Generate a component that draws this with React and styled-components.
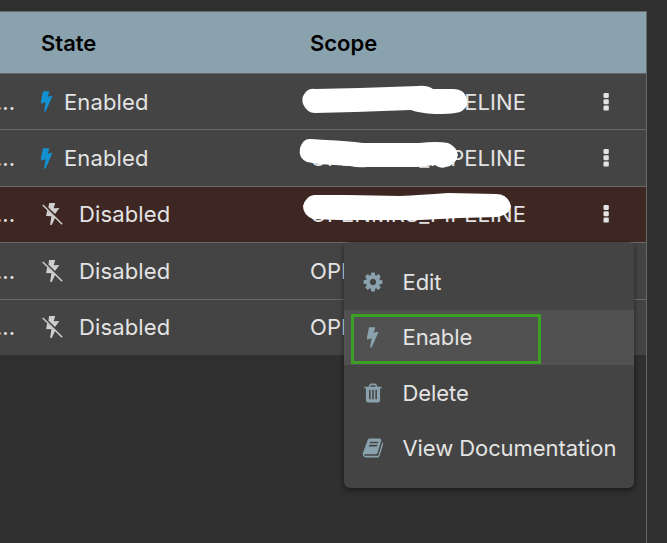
import React from "react";
import styled, { createGlobalStyle } from "styled-components";

const GlobalStyle = createGlobalStyle`
  * { box-sizing: border-box; }
  body {
    margin: 0;
    background: #303030;
    color: #e3e3e3;
    font-family: Inter, "Liberation Sans", sans-serif;
    font-size: 22px;
    overflow: hidden;
  }
`;

const Page = styled.div`
  position: relative;
  width: 667px;
  height: 543px;
  padding-top: 11px;
  overflow: hidden;
  background: #303030;
`;

const Table = styled.div`
  width: 647px;
  height: 532px;
  border-top: 1px solid #686868;
  border-right: 1px solid #686868;
`;

const Row = styled.div`
  display: grid;
  grid-template-columns: 41px 269px 270px 1fr;
  align-items: center;
  height: ${(p) => p.$height}px;
  padding-bottom: ${(p) => p.$lift || 0}px;
  background: ${(p) => (p.$selected ? "#3e2723" : "#444444")};
  border-bottom: ${(p) => (p.$last ? "0" : "1px solid #686868")};
  line-height: 28px;
`;

const HeaderRow = styled(Row)`
  background: #8aa2ae;
  color: #000;
  font-weight: 600;
`;

const Overflow = styled.div`
  display: flex;
  justify-content: flex-end;
  width: 15px;
  white-space: nowrap;
`;

const State = styled.div`
  display: flex;
  align-items: center;
`;

const StateIcon = styled.span`
  display: flex;
  flex: none;
  width: ${(p) => (p.$enabled ? 23 : 38)}px;
  padding-left: ${(p) => (p.$enabled ? 0 : 0.5)}px;
  color: ${(p) => (p.$enabled ? "#1390cf" : "#cfcfcf")};
`;

const Label = styled.span`
  letter-spacing: ${(p) => p.$spacing || 0}px;
  white-space: nowrap;
`;

const Scope = styled.div`
  position: relative;
  letter-spacing: 0.06px;
  white-space: nowrap;
`;

const Scribble = styled.svg`
  position: absolute;
  left: -15px;
  top: -19px;
  width: 230px;
  height: 60px;
  pointer-events: none;
`;

const MoreButton = styled.button`
  display: flex;
  justify-content: center;
  width: 20px;
  margin-left: 16px;
  padding: 0;
  border: 0;
  background: none;
  color: #e3e3e3;
`;

const Menu = styled.div`
  position: absolute;
  left: 344px;
  top: 242px;
  width: 290px;
  height: 246px;
  padding: 12px 0;
  display: flex;
  flex-direction: column;
  background: #444444;
  border-radius: 6px;
  box-shadow: 0 3px 6px rgba(0, 0, 0, 0.32), 0 1px 4px rgba(0, 0, 0, 0.2);
`;

const MenuItem = styled.div`
  display: flex;
  flex: 1;
  align-items: center;
  padding-left: 17px;
  background: ${(p) => (p.$active ? "#515151" : "transparent")};
`;

const MenuIcon = styled.span`
  display: flex;
  justify-content: center;
  width: 24px;
  margin-right: 17.5px;
  color: #8aa2ae;
`;

const Highlight = styled.div`
  position: absolute;
  left: 7px;
  top: 72px;
  width: 190px;
  height: 50px;
  border: 3px solid #3ba024;
`;

const paths = {
  cog: "M1152 896q0-106-75-181t-181-75-181 75-75 181 75 181 181 75 181-75 75-181zm512-109v222q0 12-8 23t-20 13l-185 28q-19 54-39 91 35 50 107 138 10 12 10 25t-9 23q-27 37-99 108t-94 71q-12 0-26-9l-138-108q-44 23-91 38-16 136-29 186-7 28-36 28h-222q-14 0-24.500-8.500t-11.500-21.500l-28-184q-49-16-90-37l-141 107q-10 9-25 9-14 0-25-11-126-114-165-168-7-10-7-23 0-12 8-23 15-21 51-66.500t54-70.500q-27-50-41-99l-183-27q-13-2-21-12.500t-8-23.500v-222q0-12 8-23t19-13l186-28q14-46 39-92-40-57-107-138-10-12-10-24 0-10 9-23 26-36 98.500-107.500t94.500-71.500q13 0 26 10l138 107q44-23 91-38 16-136 29-186 7-28 36-28h222q14 0 24.500 8.500t11.500 21.500l28 184q49 16 90 37l142-107q9-9 24-9 13 0 25 10 129 119 165 170 7 8 7 22 0 12-8 23-15 21-51 66.500t-54 70.500q26 50 41 98l183 28q13 2 21 12.500t8 23.500z",
  trash: "M704 1376v-704q0-14-9-23t-23-9h-64q-14 0-23 9t-9 23v704q0 14 9 23t23 9h64q14 0 23-9t9-23zm256 0v-704q0-14-9-23t-23-9h-64q-14 0-23 9t-9 23v704q0 14 9 23t23 9h64q14 0 23-9t9-23zm256 0v-704q0-14-9-23t-23-9h-64q-14 0-23 9t-9 23v704q0 14 9 23t23 9h64q14 0 23-9t9-23zm-544-992h448l-48-117q-7-9-17-11h-317q-10 2-17 11zm928 32v64q0 14-9 23t-23 9h-96v948q0 83-47 143.500t-113 60.500h-832q-66 0-113-58.500t-47-141.500v-952h-96q-14 0-23-9t-9-23v-64q0-14 9-23t23-9h309l70-167q15-37 54-63t79-26h320q40 0 79 26t54 63l70 167h309q14 0 23 9t9 23z",
  book: "M1703 478q40 57 18 129l-275 906q-19 64-76.500 107.500t-122.500 43.500h-923q-77 0-148.500-53.500t-99.500-131.500q-24-67-2-127 0-4 3-27t4-37q1-8-3-21.500t-3-19.500q2-11 8-21t16.500-23.500 16.500-23.500q23-38 45-91.500t30-91.500q3-10 .5-30t-.5-28q3-11 17-28t17-23q21-36 42-92t25-90q1-9-2.500-32t.5-28q4-13 22-30.500t22-22.500q19-26 42.500-84.500t27.500-96.500q1-8-3-25.500t-2-26.500q2-8 9-18t18-23 17-21q8-12 16.500-30.500t15-35 16-36 19.500-32 26.500-23.500 36-11.500 47.500 5.500l-1 3q38-9 51-9h761q74 0 114 56t18 130l-274 906q-36 119-71.500 153.500t-128.500 34.500h-869q-27 0-38 15-11 16-1 43 24 70 144 70h923q29 0 56-15.500t35-41.500l300-987q7-22 5-57 38 15 59 43zm-1064 2q-4 13 2 22.500t20 9.500h608q13 0 25.500-9.500t16.500-22.500l21-64q4-13-2-22.500t-20-9.500h-608q-13 0-25.500 9.500t-16.500 22.500zm-83 256q-4 13 2 22.500t20 9.500h608q13 0 25.500-9.500t16.500-22.500l21-64q4-13-2-22.500t-20-9.500h-608q-13 0-25.500 9.500t-16.500 22.500z",
};

const Icon = ({ name, size = 22 }) => (
  <svg width={size} height={size} viewBox="0 0 1792 1792" fill="currentColor">
    <path d={paths[name]} />
  </svg>
);

const BoltIcon = () => (
  <svg width="12" height="21" viewBox="1.500 0 36 63" fill="currentColor">
    <path d="M9 1H25Q27 1 26 3L21.500 17 33 14.500Q36 14 35 17L16 60Q15 62 13 62 10 62 11 59L15.500 34 3 37.500Q0 38 .5 35L7 3Q7.500 1 9 1Z" />
  </svg>
);

const BoltOffIcon = () => (
  <svg width="22" height="24" viewBox="0 0 22 24" fill="currentColor">
    <path d="M7.200 1h6l-1.500 5.300 5.700-.2-4.300 6L6.400 5.500z" />
    <path d="M5.200 8.200 13.200 15.500 9.900 22.800l-1.800.2 1.300-8.800L4.100 14z" />
    <path d="M.8 3 20.200 22.200" fill="none" stroke="currentColor" strokeWidth="1.500" />
  </svg>
);

const MoreIcon = () => (
  <svg width="6" height="18" viewBox="0 0 6 18" fill="currentColor">
    <rect x=".5" y="0" width="5.300" height="5" rx="1.200" />
    <rect x=".5" y="6.300" width="5.300" height="5" rx="1.200" />
    <rect x=".5" y="12.600" width="5.300" height="5" rx="1.200" />
  </svg>
);

/* Hand-drawn strokes that hide part of a scope name. */
const strokes = [
  "M20 20Q14 19 10 24Q6 29 8 35Q12 44 20 44L60 43L116 41Q124 44 140 45Q155 45 160 44Q169 43 172 36Q173 28 168 23Q164 20 158 20L138 20Q132 16 123 17L65 19Z",
  "M16 14Q8 13 5 23Q3 33 12 37L24 39L55 41Q63 43 72 42L122 42L140 40Q145 44 151 42Q161 40 163 30Q161 21 153 18Q142 16 124 18L68 18Q52 16 31 15Z",
  "M19 14Q11 15 8 25Q8 34 18 38L44 39L125 39L165 37L202 36Q215 34 216 25Q213 13 201 13L153 12Q125 14 105 15L52 14Z",
];

const rows = [
  { enabled: true, height: 56, scribble: 0 },
  { enabled: true, height: 57, scribble: 1 },
  { enabled: false, height: 56, scribble: 2, selected: true, lift: 1 },
  { enabled: false, height: 57 },
  { enabled: false, height: 55, lift: 1, last: true },
];

const actions = [
  { icon: "cog", label: "Edit" },
  { icon: "bolt", label: "Enable", active: true },
  { icon: "trash", label: "Delete" },
  { icon: "book", label: "View Documentation" },
];

export default function App() {
  return (
    <Page>
      <GlobalStyle />
      <Table>
        <HeaderRow $height={62}>
          <span />
          <Label>State</Label>
          <Label>Scope</Label>
        </HeaderRow>
        {rows.map((row, i) => (
          <Row key={i} $height={row.height} $lift={row.lift} $selected={row.selected} $last={row.last}>
            <Overflow>...</Overflow>
            <State>
              <StateIcon $enabled={row.enabled}>
                {row.enabled ? <BoltIcon /> : <BoltOffIcon />}
              </StateIcon>
              <Label $spacing={0.12}>{row.enabled ? "Enabled" : "Disabled"}</Label>
            </State>
            <Scope>
              OPENMRS_PIPELINE
              {row.scribble !== undefined && (
                <Scribble viewBox="0 0 230 60">
                  <path d={strokes[row.scribble]} fill="#fff" />
                </Scribble>
              )}
            </Scope>
            {i < 3 && (
              <MoreButton aria-label="More actions">
                <MoreIcon />
              </MoreButton>
            )}
          </Row>
        ))}
      </Table>
      <Menu>
        {actions.map((a) => (
          <MenuItem key={a.label} $active={a.active}>
            <MenuIcon>
              {a.icon === "bolt" ? <BoltIcon /> : <Icon name={a.icon} />}
            </MenuIcon>
            <Label $spacing={-0.08}>{a.label}</Label>
          </MenuItem>
        ))}
        <Highlight />
      </Menu>
    </Page>
  );
}
